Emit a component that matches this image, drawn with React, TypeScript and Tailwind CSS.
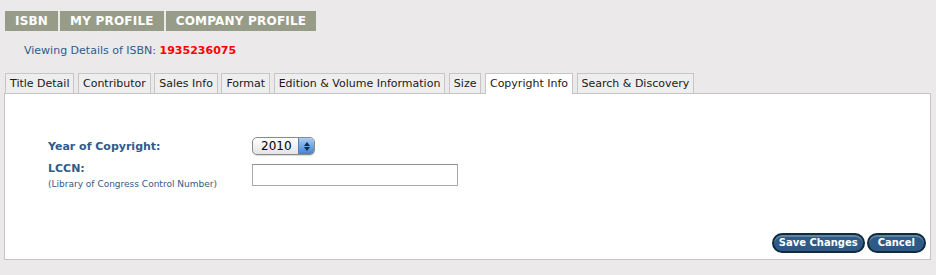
const tabs = [
  "Title Detail",
  "Contributor",
  "Sales Info",
  "Format",
  "Edition & Volume Information",
  "Size",
  "Copyright Info",
  "Search & Discovery",
];

export default function App() {
  return (
    <div
      className="w-[936px] h-[275px] bg-[#ebe9e9] pt-[11px] text-[11px]"
      style={{ fontFamily: '"DejaVu Sans", Verdana, sans-serif' }}
    >
      {/* TOP NAV */}
      <div className="flex gap-[2px] pl-[5px]">
        {["ISBN", "MY PROFILE", "COMPANY PROFILE"].map((n) => (
          <div
            key={n}
            className="h-[20px] px-[10px] bg-[#979c88] text-white font-bold text-[12px] leading-[21px] tracking-[0.2px]"
          >
            {n}
          </div>
        ))}
      </div>

      {/* ISBN LINE */}
      <div className="pl-[24px] mt-[12px] h-[16px] leading-[16px] text-[11px] text-[#2f5b8c]">
        Viewing Details of ISBN:{" "}
        <span className="font-bold text-[#ff0000]">1935236075</span>
      </div>

      {/* TABS */}
      <div className="flex gap-[3.5px] pl-[5px] mt-[14px] relative z-10">
        {tabs.map((t) => {
          const active = t === "Copyright Info";
          return (
            <div
              key={t}
              className={
                active
                  ? "h-[21px] px-[4px] leading-[20px] border border-b-0 border-[#c6c6c6] bg-white text-[#1a1a1a]"
                  : "h-[20px] px-[4px] leading-[19px] border border-b-0 border-[#c6c6c6] bg-[#eeeeee] text-[#1a1a1a]"
              }
            >
              {t}
            </div>
          );
        })}
      </div>

      {/* PANEL */}
      <div className="ml-[4px] w-[927px] h-[167px] -mt-[1px] bg-white border border-[#c4c4c4] flex flex-col">
        <div className="grid grid-cols-[204px_1fr] pl-[43px] pt-[43px]">
          <div className="font-bold text-[#2f5b8c] leading-[16px] pt-[2px]">
            Year of Copyright:
          </div>
          <div>
            <div className="w-[63px] h-[18px] rounded-[5px] border border-[#8a8a8a] bg-gradient-to-b from-white to-[#e4e4e4] flex items-center overflow-hidden shadow-[0_1px_1px_rgba(0,0,0,0.15)]">
              <span className="flex-1 pl-[8px] text-[12px] text-black leading-[16px]">2010</span>
              <span className="w-[16px] h-full bg-gradient-to-b from-[#a9cdf5] to-[#3d82d6] border-l border-[#5d7fb0] flex flex-col items-center justify-center gap-[1px]">
                <svg width="6" height="4" viewBox="0 0 6 4">
                  <path d="M3 0 L6 4 L0 4 Z" fill="#1b2a3d" />
                </svg>
                <svg width="6" height="4" viewBox="0 0 6 4">
                  <path d="M0 0 L6 0 L3 4 Z" fill="#1b2a3d" />
                </svg>
              </span>
            </div>
          </div>

          <div className="mt-[7px]">
            <div className="font-bold text-[#2f5b8c] leading-[14px]">LCCN:</div>
            <div className="text-[9px] text-[#2f5b8c] leading-[13px] mt-[2px]">
              (Library of Congress Control Number)
            </div>
          </div>
          <div className="mt-[9px]">
            <div className="w-[206px] h-[22px] border border-[#a9a9a9] border-t-[#8e8e8e] bg-white" />
          </div>
        </div>

        {/* BUTTONS */}
        <div className="mt-auto flex justify-end gap-[2px] pr-[4px] pb-[6px]">
          <button className="h-[20px] px-[5px] rounded-full bg-[#2d5a86] border-[2px] border-[#0f2b3c] text-white font-bold text-[10px] leading-[14px] shadow-[inset_0_2px_0_rgba(255,255,255,0.25)]">
            Save Changes
          </button>
          <button className="h-[20px] px-[9px] rounded-full bg-[#2d5a86] border-[2px] border-[#0f2b3c] text-white font-bold text-[10px] leading-[14px] shadow-[inset_0_2px_0_rgba(255,255,255,0.25)]">
            Cancel
          </button>
        </div>
      </div>
    </div>
  );
}
